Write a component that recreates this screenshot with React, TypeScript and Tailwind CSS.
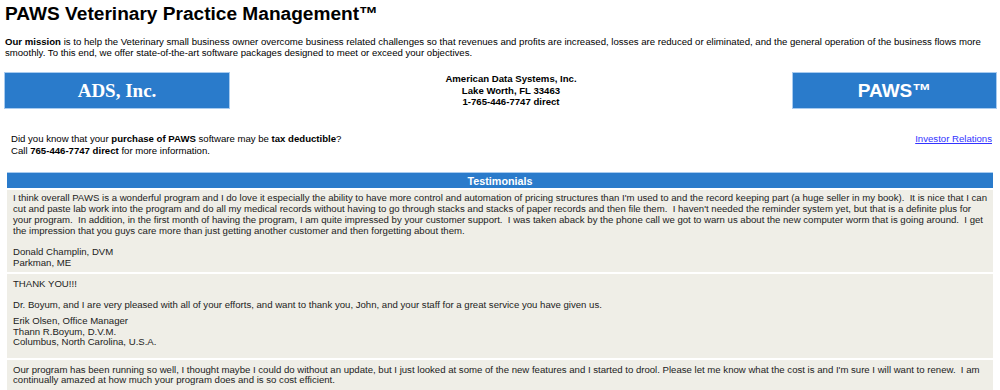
import React from "react";

const testimonials = [
  {
    id: "champlin",
    body: [
      "I think overall PAWS is a wonderful program and I do love it especially the ability to have more control and automation of pricing structures than I'm used to and the record keeping part (a huge seller in my book).\u00a0 It is nice that I can cut and paste lab work into the program and do all my medical records without having to go through stacks and stacks of paper records and then file them.\u00a0 I haven't needed the reminder system yet, but that is a definite plus for your program.\u00a0 In addition, in the first month of having the program, I am quite impressed by your customer support.\u00a0 I was taken aback by the phone call we got to warn us about the new computer worm that is going around.\u00a0 I get the impression that you guys care more than just getting another customer and then forgetting about them.",
    ],
    sign: ["Donald Champlin, DVM", "Parkman, ME"],
  },
];

export default function App() {
  return (
    <div className="w-[1000px] h-[390px] overflow-hidden bg-white text-black font-['Liberation_Sans',Arial,sans-serif]">
      <h1 className="pl-[5px] pt-[3px] text-[19.1px] leading-[22px] font-bold">
        PAWS Veterinary Practice Management™
      </h1>

      <p className="mt-[12px] px-[5px] text-[9.6px] leading-[10.7px]">
        <b>Our mission</b> is to help the Veterinary small business owner overcome business related challenges so that revenues and profits are increased, losses are reduced or eliminated, and the general operation of the business flows more smoothly. To this end, we offer state-of-the-art software packages designed to meet or exceed your objectives.
      </p>

      <div className="mt-[14px] flex items-start">
        <div className="ml-[4px] w-[226px] h-[37px] flex items-center justify-center bg-[#2a7bcb] border border-[#a8cbef] text-white font-bold font-['Liberation_Serif','Times_New_Roman',serif] text-[19px]">
          ADS, Inc.
        </div>
        <div className="flex-1 pt-[1px] text-center text-[9.6px] leading-[11.3px] font-bold">
          <div>American Data Systems, Inc.</div>
          <div>Lake Worth, FL 33463</div>
          <div>1-765-446-7747 direct</div>
        </div>
        <div className="mr-[3px] w-[205px] h-[37px] flex items-center justify-center bg-[#2a7bcb] border border-[#a8cbef] text-white font-bold text-[19px]">
          PAWS™
        </div>
      </div>

      <div className="mt-[24px] flex items-start justify-between pl-[11px] pr-[8px] text-[9.6px] leading-[12px]">
        <div>
          <div>
            Did you know that your <b>purchase of PAWS</b> software may be <b>tax deductible</b>?
          </div>
          <div>
            Call <b>765-446-7747 direct</b> for more information.
          </div>
        </div>
        <a href="#" className="text-[#3333ff] underline">
          Investor Relations
        </a>
      </div>

      <div className="mt-[15px] mx-[7px] flex flex-col gap-[2px] text-[9.6px] leading-[10.7px]">
        <div className="h-[16px] flex items-center justify-center bg-[#2a7bcb] border-t border-[#a8cbef] text-white font-bold text-[10.8px]">
          Testimonials
        </div>

        {testimonials.map((t) => (
          <div key={t.id} className="bg-[#efeee7] px-[6px] pt-[3px] pb-[4px] text-[#222]">
            {t.body.map((b, i) => (
              <div key={i}>{b}</div>
            ))}
            <div className="mt-[10.7px]">
              {t.sign.map((s) => (
                <div key={s}>{s}</div>
              ))}
            </div>
          </div>
        ))}

        <div className="bg-[#efeee7] px-[6px] pt-[4.6px] pb-[10.2px] text-[#222]">
          <div>THANK YOU!!!</div>
          <div className="mt-[10.7px]">
            Dr. Boyum, and I are very pleased with all of your efforts, and want to thank you, John, and your staff for a great service you have given us.
          </div>
          <div className="mt-[5px]">
            <div>Erik Olsen, Office Manager</div>
            <div>Thann R.Boyum, D.V.M.</div>
            <div>Columbus, North Carolina, U.S.A.</div>
          </div>
        </div>

        <div className="bg-[#efeee7] px-[6px] pt-[4.3px] pb-[4px] text-[#222]">
          Our program has been running so well, I thought maybe I could do without an update, but I just looked at some of the new features and I started to drool. Please let me know what the cost is and I'm sure I will want to renew.&nbsp; I am continually amazed at how much your program does and is so cost efficient.
        </div>
      </div>
    </div>
  );
}
